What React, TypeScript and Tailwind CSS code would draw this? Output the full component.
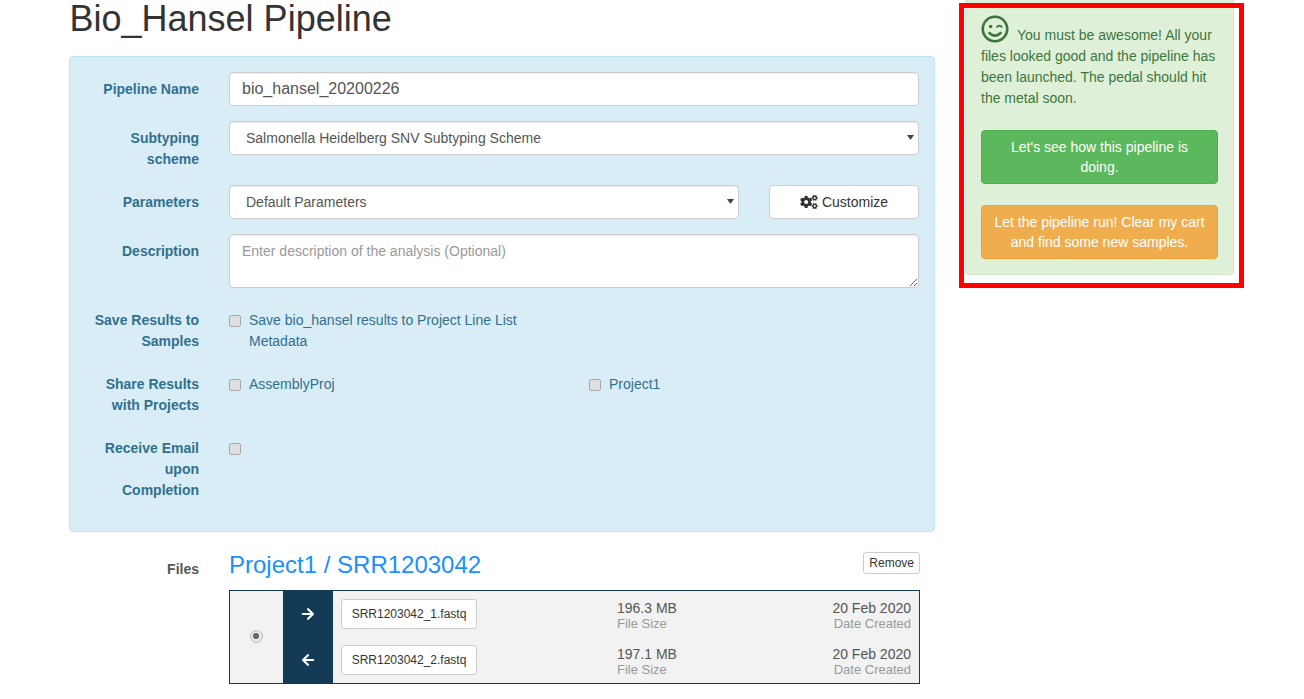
import { FaArrowLeft, FaArrowRight, FaCogs, FaRegSmileWink } from "react-icons/fa";

const files = [
    { name: "SRR1203042_1.fastq", size: "196.3 MB", date: "20 Feb 2020", icon: FaArrowRight },
    { name: "SRR1203042_2.fastq", size: "197.1 MB", date: "20 Feb 2020", icon: FaArrowLeft },
];

function FormRow({ label, children }: { label: React.ReactNode; children: React.ReactNode }) {
    return (
        <div className="flex mb-[15px]">
            <label className="w-[129px] pt-[7px] text-right font-bold text-[#31708f]">{label}</label>
            <div className="ml-[30px] w-[690px]">{children}</div>
        </div>
    );
}

const controlClass =
    "block h-[34px] bg-white border border-[#ccc] rounded px-3 text-[#555] shadow-[inset_0_1px_1px_rgba(0,0,0,0.075)]";

function Select({ value, width }: { value: string; width: string }) {
    return (
        <div className={`relative ${width}`}>
            <select className={`${controlClass} w-full text-sm appearance-none pl-4`}>
                <option>{value}</option>
            </select>
            <svg viewBox="0 0 7 5" className="absolute right-[5px] top-[14px] w-[7px] h-[5px] text-[#444] pointer-events-none">
                <path d="M0 0h7L3.5 5z" fill="currentColor" />
            </svg>
        </div>
    );
}

function CheckItem({ label }: { label?: string }) {
    return (
        <div className="flex items-start shrink-0 pt-[7px] pr-[15px] w-[360px]">
            <input
                type="checkbox"
                disabled
                className="appearance-none w-[12px] h-[12px] mt-[5px] shrink-0 bg-[#dfdfdf] border border-[#a9a9a9] rounded-[2px]"
            />
            {label && <span className="ml-[8px] text-[#31708f]">{label}</span>}
        </div>
    );
}

export default function App() {
    return (
        <div className="flex bg-white text-sm leading-[21px] text-[#333] font-['Liberation_Sans',Arial,sans-serif]">
            {/* Main form */}
            <div className="ml-[69px] w-[866px]">
                <h1 className="text-[36px] leading-[38px] ml-[0.5px] mb-[18px] font-normal text-[#333]">Bio_Hansel Pipeline</h1>

                <div className="bg-[#d9edf7] border border-[#bce8f1] rounded pt-[15px] h-[476px]">
                    <FormRow label="Pipeline Name">
                        <input
                            readOnly
                            value="bio_hansel_20200226"
                            className={`${controlClass} w-[690px] text-base`}
                        />
                    </FormRow>
                    <FormRow label={<>Subtyping<br />scheme</>}>
                        <Select value="Salmonella Heidelberg SNV Subtyping Scheme" width="w-[690px]" />
                    </FormRow>
                    <FormRow label="Parameters">
                        <div className="flex">
                            <Select value="Default Parameters" width="w-[510px]" />
                            <button className="ml-[30px] w-[150px] h-[34px] flex items-center justify-center bg-white border border-[#ccc] rounded text-[#333]">
                                <FaCogs className="w-[18px] h-[14px] mr-[4px]" />
                                Customize
                            </button>
                        </div>
                    </FormRow>
                    <FormRow label="Description">
                        <textarea
                            rows={2}
                            placeholder="Enter description of the analysis (Optional)"
                            className="block w-[690px] h-[54px] bg-white border border-[#ccc] rounded px-3 py-[6px] text-sm text-[#555] placeholder:text-[#999] shadow-[inset_0_1px_1px_rgba(0,0,0,0.075)]"
                        />
                    </FormRow>
                    <FormRow label={<>Save Results to<br />Samples</>}>
                        <CheckItem label="Save bio_hansel results to Project Line List Metadata" />
                    </FormRow>
                    <FormRow label={<>Share Results<br />with Projects</>}>
                        <div className="flex">
                            <CheckItem label="AssemblyProj" />
                            <CheckItem label="Project1" />
                        </div>
                    </FormRow>
                    <FormRow label={<>Receive Email<br />upon<br />Completion</>}>
                        <CheckItem />
                    </FormRow>
                </div>

                {/* Files */}
                <div className="flex mt-[20px] ml-[5px]">
                    <div className="w-[125px] pt-[7px] text-right font-bold text-[#555]">Files</div>
                    <div className="ml-[30px] w-[691px]">
                        <div className="flex items-start justify-between h-[38px]">
                            <h2 className="text-2xl leading-[26px] text-[#1890ff]">Project1 / SRR1203042</h2>
                            <button className="h-[22px] px-[5px] bg-white border border-[#ccc] rounded-[3px] text-xs leading-[18px] text-[#333]">
                                Remove
                            </button>
                        </div>
                        <div className="flex h-[94px] border border-[#143b55] bg-[#f2f2f2]">
                            <div className="w-[53px] flex items-center justify-center pb-[2px] pr-[1px]">
                                <span className="w-[13px] h-[13px] flex items-center justify-center rounded-full bg-[#e8e8e8] border border-[#bbb]">
                                    <span className="w-[6px] h-[6px] rounded-full bg-[#666]" />
                                </span>
                            </div>
                            <div className="flex-1">
                                {files.map((file) => {
                                    const Icon = file.icon;
                                    return (
                                        <div key={file.name} className="flex h-[46px]">
                                            <div className="w-[50px] bg-[#143b55] flex items-center justify-center text-white">
                                                <Icon className="w-[14px] h-[14px]" />
                                            </div>
                                            <div className="flex-1 flex items-center pl-[8px] pr-[8px]">
                                                <div className="w-[136px] h-[30px] bg-white border border-[#ccc] rounded-[3px] flex items-center justify-center text-xs text-[#333]">
                                                    {file.name}
                                                </div>
                                                <div className="ml-[140px] pt-[4px] leading-[16px]">
                                                    <div className="text-[#555]">{file.size}</div>
                                                    <div className="text-[13px] text-[#999]">File Size</div>
                                                </div>
                                                <div className="ml-auto pt-[4px] text-right leading-[16px]">
                                                    <div className="text-[#555]">{file.date}</div>
                                                    <div className="text-[13px] text-[#999]">Date Created</div>
                                                </div>
                                            </div>
                                        </div>
                                    );
                                })}
                            </div>
                        </div>
                    </div>
                </div>
            </div>

            {/* Launch message */}
            <div className="relative ml-[30px] w-[269px] h-[275px] self-start">
                <div className="h-[275px] bg-[#dff0d8] border border-[#d6e9c6] border-t-0 rounded-b px-[15px] pt-[15px] text-[#3c763d]">
                    <p className="mb-[21px]">
                        <FaRegSmileWink className="inline-block w-[28px] h-[28px] mr-[8px] align-[-3px]" />
                        You must be awesome! All your files looked good and the pipeline has been launched. The pedal should hit the metal soon.
                    </p>
                    <button className="block w-[237px] h-[54px] mb-[21px] px-3 leading-[20px] bg-[#5cb85c] border border-[#4cae4c] rounded text-white">
                        Let's see how this pipeline is doing.
                    </button>
                    <button className="block w-[237px] h-[54px] px-3 leading-[20px] bg-[#f0ad4e] border border-[#eea236] rounded text-white">
                        Let the pipeline run! Clear my cart and find some new samples.
                    </button>
                </div>
                {/* Red annotation frame drawn over the alert */}
                <div className="absolute left-[-6px] top-[3px] w-[285px] h-[285px] border-[5px] border-[#ff0000] pointer-events-none" />
            </div>
        </div>
    );
}
